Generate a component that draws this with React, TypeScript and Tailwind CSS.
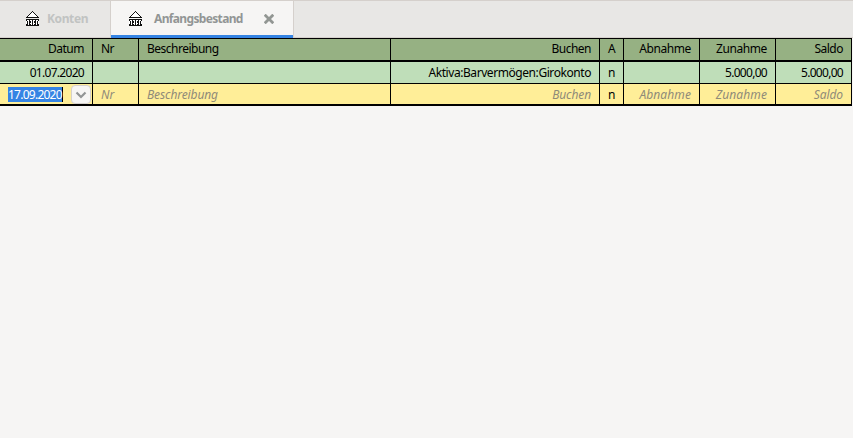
import React from "react";

const GRID =
  "grid grid-cols-[92px_46px_252px_209px_24px_76px_76px_77px] w-[852px] border-black [&>*]:border-black [&>*]:flex [&>*]:items-center [&>*]:whitespace-pre [&>*:not(:first-child)]:border-l [&>*:last-child]:border-r";

const RIGHT = "justify-end pr-2";
const LEFT = "pl-2";

function BankIcon() {
  return (
    <svg width="16" height="16" viewBox="0 0 16 16" shapeRendering="crispEdges" className="shrink-0">
      <path d="M7 1h1v1h1v1h1v1h1v1h1v1h1v1H2V6h1V5h1V4h1V3h1V2h1z" fill="#fff" />
      <path d="M1 8h13v6H1z" fill="#fff" />
      <path
        d="M7 0h1v1H7zM6 1h1v1H6zM8 1h1v1H8zM5 2h1v1H5zM9 2h1v1H9zM4 3h1v1H4zM10 3h1v1h-1zM3 4h1v1H3zM11 4h1v1h-1zM2 5h1v1H2zM12 5h1v1h-1zM1 6h13v1H1zM1 8h13v1H1zM1 9h1v1H1zM4 9h1v4H4zM7 9h1v4H7zM10 9h1v4h-1zM13 9h1v1h-1zM2 10h1v3H2zM12 10h1v3h-1zM5 10h1v2H5zM9 10h1v2H9zM1 13h13v1H1zM1 14h13v1H1z"
        fill="#111"
      />
      <path d="M3 13h1v1H3zM6 13h1v1H6zM8 13h1v1H8zM11 13h1v1h-1z" fill="#fff" />
    </svg>
  );
}

function Tabs() {
  return (
    <div className="flex h-[38px] border-t border-[#d5d0cc] bg-[#e8e7e5] text-[12px] font-bold">
      <div className="flex w-[110px] items-center border-b border-[#d5d0cc] pl-[25px] text-[#c1c3c2]">
        <BankIcon />
        <span className="ml-[6px] tracking-[-0.4px]">Konten</span>
      </div>
      <div className="flex w-[184px] items-center border-x border-[#d5d0cc] bg-[#f6f5f4] pb-px pl-[17px] text-[#929595] shadow-[inset_0_-3px_0_#3584e4]">
        <BankIcon />
        <span className="ml-[10px] w-[90px] whitespace-nowrap tracking-[-0.65px]">Anfangsbestand</span>
        <svg width="10" height="10" viewBox="0 0 10 10" className="ml-[20px]">
          <path d="M1.7 1.7l6.6 6.6M8.3 1.7l-6.6 6.6" stroke="#929693" strokeWidth="2.8" strokeLinecap="square" />
        </svg>
      </div>
      <div className="flex-1 border-b border-[#d5d0cc]" />
    </div>
  );
}

export default function App() {
  return (
    <div className="h-[438px] w-[853px] overflow-hidden bg-[#f6f5f4] font-['Noto_Sans','Open_Sans',sans-serif] text-[12px] leading-4 text-black">
      <Tabs />
      <div className={`${GRID} h-[24px] border-t border-b-2 bg-[#96b183] tracking-[-0.5px] [&>*]:pb-px`}>
        <div className={RIGHT}>Datum</div>
        <div className={LEFT}>Nr</div>
        <div className={LEFT}>Beschreibung</div>
        <div className={RIGHT}>Buchen</div>
        <div className={LEFT}>A</div>
        <div className={`${RIGHT} tracking-[-0.4px]`}>Abnahme</div>
        <div className={`${RIGHT} tracking-[-0.4px]`}>Zunahme</div>
        <div className={RIGHT}>Saldo</div>
      </div>
      <div className={`${GRID} h-[22px] border-b bg-[#bfdeb9] tracking-[-0.7px]`}>
        <div className={RIGHT}>01.07.2020</div>
        <div />
        <div />
        <div className={`${RIGHT} tracking-[-0.43px]`}>Aktiva:Barvermögen:Girokonto</div>
        <div className={LEFT}>n</div>
        <div />
        <div className={RIGHT}>5.000,00</div>
        <div className={RIGHT}>5.000,00</div>
      </div>
      <div className={`${GRID} h-[22px] border-b-2 bg-[#ffee98] text-[#8f8b78] tracking-[-0.1px] [&>*]:pt-px`}>
        <div className="pl-2">
          <span className="h-[15px] w-[55px] border-r border-black bg-[#3584e4] leading-[15px] tracking-[-0.75px] text-white">
            17.09.2020
          </span>
          <span className="ml-2 flex h-[19px] w-[20px] shrink-0 items-center justify-center rounded-[4px] border border-[#d5d0cc] bg-[#f6f5f4]">
            <svg width="12" height="8" viewBox="0 0 12 8" fill="none">
              <path d="M1.5 1.5l4.5 4.5 4.5-4.5" stroke="#929595" strokeWidth="2.2" />
            </svg>
          </span>
        </div>
        <div className={`${LEFT} italic`}>Nr</div>
        <div className={`${LEFT} italic`}>Beschreibung</div>
        <div className={`${RIGHT} italic`}>Buchen</div>
        <div className={`${LEFT} text-black`}>n</div>
        <div className={`${RIGHT} italic tracking-[0.1px]`}>Abnahme</div>
        <div className={`${RIGHT} italic tracking-[0.1px]`}>Zunahme</div>
        <div className={`${RIGHT} italic`}>Saldo</div>
      </div>
    </div>
  );
}
